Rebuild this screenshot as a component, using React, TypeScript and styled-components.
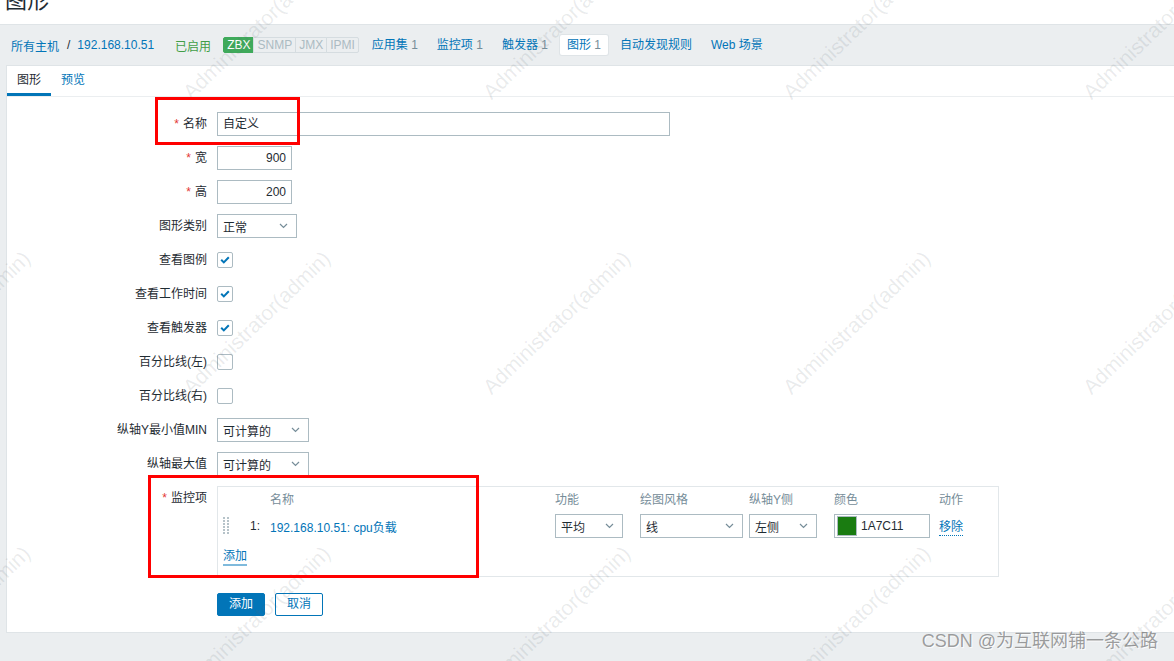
import React from 'react'
import styled, { createGlobalStyle } from 'styled-components'

const FONT = `"Liberation Sans", Arial, "Noto Sans CJK SC", sans-serif`

const GlobalStyle = createGlobalStyle`
  html, body {
    margin: 0;
    padding: 0;
    overflow: hidden;
    background: #ebeef0;
  }
  body {
    font-family: ${FONT};
    font-size: 12px;
    color: #1f2c33;
  }
`

const Chevron = () => (
  <svg width="9" height="6" viewBox="0 0 9 6">
    <path d="M1 1 L4.5 4.5 L8 1" fill="none" stroke="#768d99" strokeWidth="1.2" />
  </svg>
)

const Check = () => (
  <svg width="10" height="8" viewBox="0 0 10 8">
    <path d="M1.2 3.8 L3.8 6.4 L8.8 1.2" fill="none" stroke="#0275b8" strokeWidth="2" />
  </svg>
)

const DragHandle = () => (
  <svg width="7" height="18" viewBox="0 0 7 18">
    {[0, 3, 6, 9, 12, 15].map((y) =>
      [0, 4].map((x) => <rect key={`${x}-${y}`} x={x} y={y} width="2" height="2" fill="#b6c3c9" />)
    )}
  </svg>
)

const watermarks: [number, number][] = []
for (const y of [100, 395, 690]) {
  for (const x of [-105, 195, 495, 795, 1095]) watermarks.push([x, y])
}

const App: React.FC = () => {
  return (
    <Page>
      <GlobalStyle />
      <Header>
        <Title>图形</Title>
      </Header>
      <Nav>
        <Crumb>所有主机</Crumb>
        <Sep>/</Sep>
        <Crumb>192.168.10.51</Crumb>
        <Status>已启用</Status>
        <Badges>
          <Badge $on>ZBX</Badge>
          <Badge>SNMP</Badge>
          <Badge>JMX</Badge>
          <Badge>IPMI</Badge>
        </Badges>
        <NavItems>
          <NavItem>应用集 <Count>1</Count></NavItem>
          <NavItem>监控项 <Count>1</Count></NavItem>
          <NavItem>触发器 <Count>1</Count></NavItem>
          <NavItem $active>图形 <Count>1</Count></NavItem>
          <NavItem>自动发现规则</NavItem>
          <NavItem>Web 场景</NavItem>
        </NavItems>
      </Nav>
      <Panel>
        <Tabs>
          <Tab $active>图形</Tab>
          <Tab>预览</Tab>
        </Tabs>
        <Form>
          <Label><Req>*</Req>名称</Label>
          <Field><TextInput $w={453}>自定义</TextInput></Field>

          <Label><Req>*</Req>宽</Label>
          <Field><TextInput $w={75} $right>900</TextInput></Field>

          <Label><Req>*</Req>高</Label>
          <Field><TextInput $w={75} $right>200</TextInput></Field>

          <Label>图形类别</Label>
          <Field><Select $w={80}>正常<Chevron /></Select></Field>

          <Label>查看图例</Label>
          <Field><Checkbox><Check /></Checkbox></Field>

          <Label>查看工作时间</Label>
          <Field><Checkbox><Check /></Checkbox></Field>

          <Label>查看触发器</Label>
          <Field><Checkbox><Check /></Checkbox></Field>

          <Label>百分比线(左)</Label>
          <Field><Checkbox /></Field>

          <Label>百分比线(右)</Label>
          <Field><Checkbox /></Field>

          <Label>纵轴Y最小值MIN</Label>
          <Field><Select $w={92}>可计算的<Chevron /></Select></Field>

          <Label>纵轴最大值</Label>
          <Field><Select $w={92}>可计算的<Chevron /></Select></Field>

          <Label><Req>*</Req>监控项</Label>
          <ItemsBox>
            <ItemsGrid>
              <Head />
              <Head />
              <Head>名称</Head>
              <Head>功能</Head>
              <Head>绘图风格</Head>
              <Head>纵轴Y侧</Head>
              <Head>颜色</Head>
              <Head>动作</Head>

              <Cell><DragHandle /></Cell>
              <Cell>1:</Cell>
              <Cell><Link>192.168.10.51: cpu负载</Link></Cell>
              <Cell><Select $w={68}>平均<Chevron /></Select></Cell>
              <Cell><Select $w={103}>线<Chevron /></Select></Cell>
              <Cell><Select $w={68}>左侧<Chevron /></Select></Cell>
              <Cell>
                <ColorInput>
                  <Swatch $c="#1a7c11" />
                  1A7C11
                </ColorInput>
              </Cell>
              <Cell><Action>移除</Action></Cell>
            </ItemsGrid>
            <AddRow><AddLink>添加</AddLink></AddRow>
          </ItemsBox>

          <span />
          <Buttons>
            <Button $primary>添加</Button>
            <Button>取消</Button>
          </Buttons>
        </Form>
      </Panel>

      <Overlay>
        {watermarks.map(([x, y]) => (
          <Watermark key={`${x}-${y}`} style={{ left: x, top: y - 20 }}>
            Administrator(admin)
          </Watermark>
        ))}
        <RedBox style={{ left: 155, top: 97, width: 145, height: 48 }} />
        <RedBox style={{ left: 148, top: 475, width: 331, height: 103 }} />
        <Csdn>CSDN @为互联网铺一条公路</Csdn>
      </Overlay>
    </Page>
  )
}

const Page = styled.div`
  position: relative;
  height: 661px;
  overflow: hidden;
  background: #ebeef0;
`

const Header = styled.div`
  height: 24px;
  background: #ffffff;
  border-bottom: 1px solid #dfe4e7;
  overflow: hidden;
`

const Title = styled.h1`
  margin: -10px 0 0 5px;
  font-size: 22px;
  line-height: 22px;
  font-weight: normal;
  color: #1f2c33;
`

const Nav = styled.div`
  display: flex;
  align-items: center;
  height: 40px;
  padding-left: 11px;
`

const Crumb = styled.span`
  color: #0275b8;
`

const Sep = styled.span`
  margin: 0 7px 0 8px;
  color: #1f2c33;
`

const Status = styled.span`
  margin-left: 21px;
  color: #429e47;
`

const Badges = styled.div`
  display: flex;
  margin-left: 13px;
`

const Badge = styled.span<{ $on?: boolean }>`
  height: 14px;
  line-height: 14px;
  padding: 0 3px;
  border: 1px solid ${(p) => (p.$on ? '#3faa5b' : '#d5dce0')};
  background: ${(p) => (p.$on ? '#3faa5b' : '#ebeef0')};
  color: ${(p) => (p.$on ? '#ffffff' : '#acbbc2')};
  margin-left: -1px;
  &:first-child {
    border-radius: 2px 0 0 2px;
  }
  &:last-child {
    border-radius: 0 2px 2px 0;
  }
`

const NavItems = styled.div`
  display: flex;
  align-items: center;
  gap: 5px;
  margin-left: 6px;
`

const NavItem = styled.span<{ $active?: boolean }>`
  padding: 0 7px;
  height: 20px;
  line-height: 20px;
  color: #0275b8;
  border-radius: 2px;
  background: ${(p) => (p.$active ? '#ffffff' : 'transparent')};
  box-shadow: ${(p) => (p.$active ? '0 0 0 1px #dfe4e7' : 'none')};
`

const Count = styled.span`
  color: #768d99;
`

const Panel = styled.div`
  margin-left: 6px;
  background: #ffffff;
  border: 1px solid #dfe4e7;
  border-right: none;
  padding-bottom: 16px;
`

const Tabs = styled.div`
  display: flex;
  height: 30px;
  border-bottom: 1px solid #ebeef0;
`

const Tab = styled.div<{ $active?: boolean }>`
  padding: 0 10px;
  line-height: 28px;
  color: ${(p) => (p.$active ? '#1f2c33' : '#0275b8')};
  border-bottom: 3px solid ${(p) => (p.$active ? '#0275b8' : 'transparent')};
  height: 27px;
`

const Form = styled.div`
  display: grid;
  grid-template-columns: 200px 1fr;
  column-gap: 10px;
  row-gap: 10px;
  padding-top: 15px;
`

const Label = styled.div`
  text-align: right;
  line-height: 24px;
  height: 24px;
  white-space: nowrap;
`

const Req = styled.span`
  color: #e33734;
  margin-right: 4px;
`

const Field = styled.div`
  display: flex;
  align-items: center;
  height: 24px;
`

const TextInput = styled.div<{ $w: number; $right?: boolean }>`
  box-sizing: border-box;
  width: ${(p) => p.$w}px;
  height: 24px;
  line-height: 22px;
  padding: 0 5px;
  border: 1px solid #acbbc2;
  text-align: ${(p) => (p.$right ? 'right' : 'left')};
  background: #ffffff;
`

const Select = styled.div<{ $w: number }>`
  box-sizing: border-box;
  display: flex;
  align-items: center;
  justify-content: space-between;
  width: ${(p) => p.$w}px;
  height: 24px;
  padding: 0 8px 0 5px;
  border: 1px solid #acbbc2;
  background: #ffffff;
`

const Checkbox = styled.div`
  box-sizing: border-box;
  display: flex;
  align-items: center;
  justify-content: center;
  width: 16px;
  height: 16px;
  border: 1px solid #acbbc2;
  border-radius: 2px;
  background: #ffffff;
`

const ItemsBox = styled.div`
  box-sizing: border-box;
  width: 782px;
  border: 1px solid #e2e7ea;
  padding: 0 0 8px 5px;
`

const ItemsGrid = styled.div`
  display: grid;
  grid-template-columns: 27px 20px 285px 85px 109px 85px 105px auto;
  grid-template-rows: 22px 24px;
  row-gap: 5px;
  align-items: center;
`

const Head = styled.div`
  color: #768d99;
`

const Cell = styled.div`
  display: flex;
  align-items: center;
  white-space: nowrap;
`

const Link = styled.span`
  color: #0275b8;
`

const ColorInput = styled.div`
  box-sizing: border-box;
  display: flex;
  align-items: center;
  gap: 4px;
  width: 96px;
  height: 24px;
  padding: 0 2px;
  border: 1px solid #acbbc2;
`

const Swatch = styled.span<{ $c: string }>`
  box-sizing: border-box;
  width: 20px;
  height: 20px;
  background: ${(p) => p.$c};
  border: 1px solid #acbbc2;
`

const Action = styled.span`
  color: #0275b8;
  border-bottom: 1px dotted #0275b8;
  line-height: 15px;
  margin-top: 3px;
`

const AddRow = styled.div`
  display: flex;
  align-items: center;
  height: 22px;
  margin-top: 8px;
`

const AddLink = styled.span`
  color: #0275b8;
  line-height: 15px;
  border-bottom: 2px solid #7fbadc;
`

const Buttons = styled.div`
  display: flex;
  gap: 10px;
  margin-top: 6px;
`

const Button = styled.div<{ $primary?: boolean }>`
  box-sizing: border-box;
  width: 48px;
  height: 23px;
  line-height: 21px;
  text-align: center;
  border-radius: 2px;
  border: 1px solid #0275b8;
  background: ${(p) => (p.$primary ? '#0275b8' : '#ffffff')};
  color: ${(p) => (p.$primary ? '#ffffff' : '#0275b8')};
`

const Overlay = styled.div`
  position: absolute;
  inset: 0;
  pointer-events: none;
`

const Watermark = styled.span`
  position: absolute;
  font-size: 21px;
  line-height: 24px;
  white-space: nowrap;
  color: rgba(90, 100, 110, 0.13);
  transform-origin: 0 100%;
  transform: rotate(-44deg);
`

const RedBox = styled.div`
  position: absolute;
  box-sizing: border-box;
  border: 3px solid #ff0000;
`

const Csdn = styled.div`
  position: absolute;
  right: 16px;
  top: 630px;
  font-size: 18px;
  line-height: 22px;
  color: rgba(80, 80, 80, 0.55);
  text-shadow: 1px 1px 0 rgba(255, 255, 255, 0.8);
  white-space: nowrap;
`

export default App
